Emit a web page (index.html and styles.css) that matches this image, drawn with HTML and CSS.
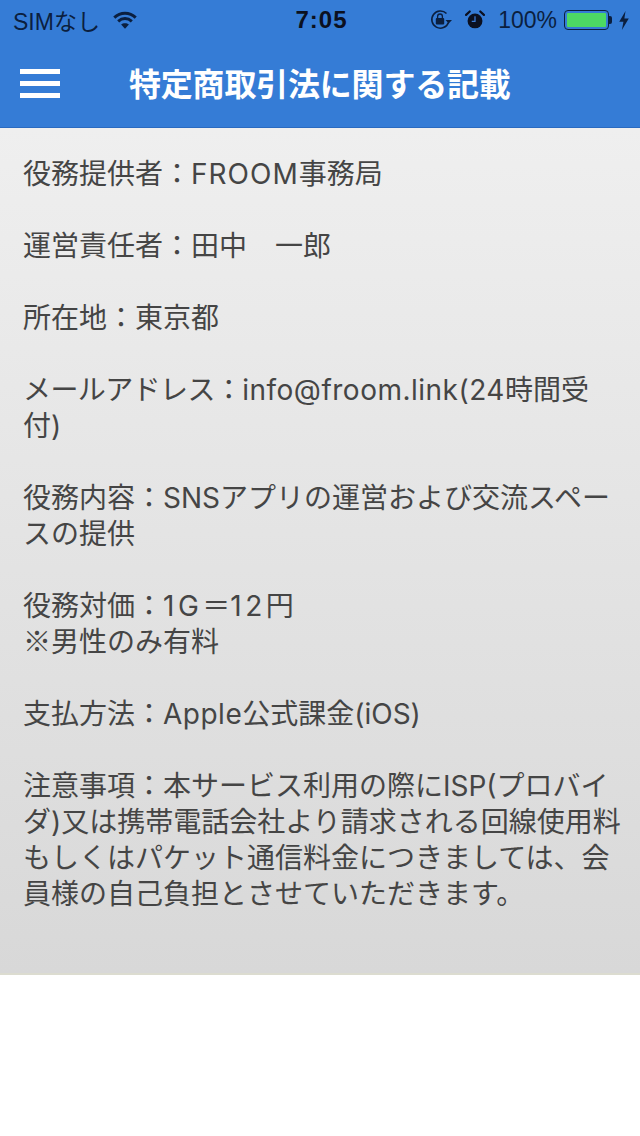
FILE: index.html
```html
<!DOCTYPE html>
<html lang="ja">
<head>
  <meta charset="UTF-8" />
  <meta name="viewport" content="width=device-width, initial-scale=1.0"/>
  <title>特定商取引法に関する記載</title>
  <link rel="stylesheet" href="styles.css">
</head>
<body>
  <header class="header">
    <div class="status-bar">
      <div class="status-left">
        <span>SIMなし</span>
        <svg class="wifi" width="24" height="20" viewBox="0 0 26 20">
          <path d="M1.4 7.4 C8 1 18 1 24.6 7.4" fill="none" stroke="#0b1f3f" stroke-width="3.2"/>
          <path d="M5.6 11.4 C10 7.4 16 7.4 20.4 11.4" fill="none" stroke="#0b1f3f" stroke-width="3.2"/>
          <path d="M13 19.6 L8.8 15 C11 13 15 13 17.2 15 Z" fill="#0b1f3f"/>
        </svg>
      </div>
      <div class="status-time">7:05</div>
      <div class="status-right">
        <svg class="lock-rotate" width="24" height="24" viewBox="0 0 24 24">
          <path d="M19.5 14.5 A8.6 8.6 0 1 1 17.5 5.5" fill="none" stroke="#0b1f3f" stroke-width="1.6"/>
          <path d="M16.5 12 L23 12 L19.7 15.6 Z" fill="#0b1f3f"/>
          <rect x="6.8" y="10" width="8.4" height="6.6" rx="1" fill="#0b1f3f"/>
          <path d="M8.6 10 V8.4 a2.4 2.4 0 0 1 4.8 0 V10" fill="none" stroke="#0b1f3f" stroke-width="1.3"/>
        </svg>
        <svg class="alarm" width="20" height="20" viewBox="0 0 22 22">
          <circle cx="11" cy="12" r="8.2" fill="#0b1020"/>
          <path d="M11 7 V12.6 H7.4" fill="none" stroke="#3a7bd5" stroke-width="1.4"/>
          <path d="M1.2 5.4 L5.2 1.6 M20.8 5.4 L16.8 1.6" stroke="#0b1020" stroke-width="2.4" stroke-linecap="round"/>
        </svg>
        <span class="battery-text">100%</span>
        <div class="battery">
          <div class="battery-body"><div class="battery-fill"></div></div>
          <div class="battery-tip"></div>
        </div>
        <svg class="bolt" width="12" height="21" viewBox="0 0 12 22">
          <path d="M7.6 1 L1 12.4 H5.4 L3.8 21 L11 8.8 H6.4 Z" fill="#0b1f3f"/>
        </svg>
      </div>
    </div>
    <div class="nav-bar">
      <button class="menu-btn" aria-label="menu">
        <span></span><span></span><span></span>
      </button>
      <h1 class="nav-title">特定商取引法に関する記載</h1>
    </div>
  </header>

  <main class="content">
    <p>役務提供者：<span class="wide">FROOM</span>事務局</p>
    <p>運営責任者：田中　一郎</p>
    <p>所在地：東京都</p>
    <p><span class="tight">メールアドレス：</span><span class="loose">info@froom.link(24</span><span>時間受</span><span>付)</span></p>
    <p>役務内容：SNSアプリの運営および交流スペースの提供</p>
    <p>役務対価：<span class="digits">1G</span>＝<span class="digits">12</span>円<br><span class="mark">※</span>男性のみ有料</p>
    <p>支払方法：<span class="loose">Apple</span>公式課金(iOS)</p>
    <p>注意事項：本サービス利用の際にISP(プロバイダ)又は携帯電話会社より請求される回線使用料もしくはパケット通信料金につきましては、会員様の自己負担とさせていただきます。</p>
  </main>
</body>
</html>
```

FILE: styles.css
```css
* {
  box-sizing: border-box;
}

body {
  margin: 0;
  background: #fff;
  font-family: "Inter", "Noto Sans CJK JP", sans-serif;
}

.header {
  height: 128px;
  background: #357cd6;
  border-bottom: 1px solid #2a6ac0;
}

.status-bar {
  height: 40px;
  padding: 0 10px 0 13px;
  display: grid;
  grid-template-columns: 1fr auto 1fr;
  align-items: center;
  font-family: "Liberation Sans", "Noto Sans CJK JP", sans-serif;
  font-size: 23px;
  color: #0b1f3f;
}

.status-left {
  display: flex;
  align-items: center;
  gap: 13px;
}

.status-time {
  font-weight: bold;
  font-size: 24px;
  letter-spacing: 1px;
  color: #0b1020;
}

.status-right {
  display: flex;
  align-items: center;
  justify-content: flex-end;
}

.alarm {
  margin-left: 12px;
}

.battery-text {
  margin-left: 13px;
}

.battery {
  margin-left: 7px;
  display: flex;
  align-items: center;
}

.bolt {
  margin-left: 6px;
}

.battery-body {
  width: 45px;
  height: 20px;
  padding: 2px;
  border: 1.5px solid #0b1f3f;
  border-radius: 4px;
}

.battery-fill {
  height: 100%;
  background: #4cd964;
  border-radius: 1px;
}

.battery-tip {
  width: 3px;
  height: 8px;
  background: #0b1f3f;
  border-radius: 0 2px 2px 0;
}

.nav-bar {
  height: 87px;
  padding: 0 0 0 20px;
  display: flex;
  align-items: center;
  gap: 69px;
}

.menu-btn {
  width: 40px;
  padding: 0;
  border: none;
  background: none;
  display: flex;
  flex-direction: column;
  gap: 7px;
}

.menu-btn span {
  display: block;
  height: 5px;
  background: #fff;
}

.nav-title {
  margin: 2px 0 0;
  font-size: 32px;
  line-height: 40px;
  font-weight: bold;
  letter-spacing: -0.2px;
  color: #fff;
  white-space: nowrap;
}

.content {
  height: 847px;
  padding: 28px 18px 0 23px;
  background: linear-gradient(to bottom, #efefef, #d8d8d8);
  border-bottom: 2px solid #dcdcd0;
  font-size: 28px;
  line-height: 36px;
  color: #454545;
}

.content p {
  margin: 0 0 36px;
}

.tight {
  letter-spacing: -0.6px;
}

.loose {
  letter-spacing: 0.5px;
}

.wide {
  letter-spacing: 1px;
}

.digits {
  letter-spacing: 3.5px;
}

.mark {
  font-family: "Noto Sans CJK JP", sans-serif;
  line-height: 0;
}
```
